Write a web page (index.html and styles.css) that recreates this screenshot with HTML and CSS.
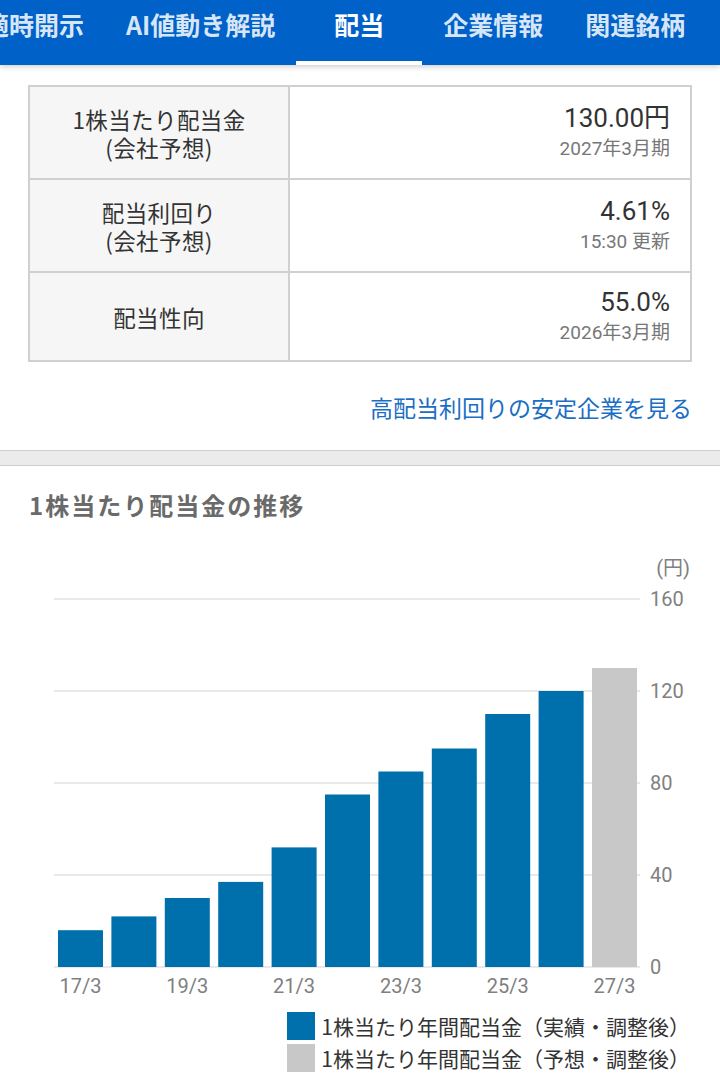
FILE: index.html
```html
<!DOCTYPE html>
<html lang="ja">
<head>
<meta charset="utf-8">
<title>配当</title>
<link rel="stylesheet" href="styles.css">
</head>
<body>
<header class="tabbar">
  <nav class="tabs">
    <a class="tab">適時開示</a>
    <a class="tab">AI値動き解説</a>
    <a class="tab active">配当</a>
    <a class="tab">企業情報</a>
    <a class="tab">関連銘柄</a>
  </nav>
</header>
<main>
  <section class="summary">
    <div class="stats">
      <div class="label">1株当たり配当金<br>(会社予想)</div>
      <div class="value"><span class="num">130.00円</span><span class="sub">2027年3月期</span></div>
      <div class="label">配当利回り<br>(会社予想)</div>
      <div class="value"><span class="num">4.61%</span><span class="sub">15:30 更新</span></div>
      <div class="label last">配当性向</div>
      <div class="value last"><span class="num">55.0%</span><span class="sub">2026年3月期</span></div>
    </div>
    <p class="more"><a href="#">高配当利回りの安定企業を見る</a></p>
  </section>
  <div class="sep"></div>
  <section class="trend">
    <h2 class="title">1株当たり配当金の推移</h2>
    <svg class="chart" width="720" height="455" viewBox="0 0 720 455">
      <text class="unit" x="690" y="25" text-anchor="end">(円)</text>
      <g class="grid">
        <line x1="54" y1="49" x2="640" y2="49"/>
        <line x1="54" y1="141" x2="640" y2="141"/>
        <line x1="54" y1="233" x2="640" y2="233"/>
        <line x1="54" y1="325" x2="640" y2="325"/>
        <line x1="54" y1="417" x2="640" y2="417"/>
      </g>
      <g class="ylab">
        <text x="650" y="56">160</text>
        <text x="650" y="148">120</text>
        <text x="650" y="240">80</text>
        <text x="650" y="332">40</text>
        <text x="650" y="424">0</text>
      </g>
      <g class="bars">
        <rect x="58" y="380.2" width="45" height="36.8"/>
        <rect x="111.4" y="366.4" width="45" height="50.6"/>
        <rect x="164.8" y="348" width="45" height="69"/>
        <rect x="218.2" y="331.9" width="45" height="85.1"/>
        <rect x="271.6" y="297.4" width="45" height="119.6"/>
        <rect x="325" y="244.5" width="45" height="172.5"/>
        <rect x="378.4" y="221.5" width="45" height="195.5"/>
        <rect x="431.8" y="198.5" width="45" height="218.5"/>
        <rect x="485.2" y="164" width="45" height="253"/>
        <rect x="538.6" y="141" width="45" height="276"/>
        <rect class="est" x="592" y="118" width="45" height="299"/>
      </g>
      <g class="xlab">
        <text x="80.5" y="443">17/3</text>
        <text x="187.3" y="443">19/3</text>
        <text x="294.1" y="443">21/3</text>
        <text x="400.9" y="443">23/3</text>
        <text x="507.7" y="443">25/3</text>
        <text x="614.5" y="443">27/3</text>
      </g>
    </svg>
    <ul class="legend">
      <li><span class="key actual"></span>1株当たり年間配当金（実績・調整後）</li>
      <li><span class="key forecast"></span>1株当たり年間配当金（予想・調整後）</li>
    </ul>
  </section>
</main>
</body>
</html>
```
FILE: styles.css
```css
* { box-sizing: border-box; }
html, body { margin: 0; padding: 0; background: #fff; }
body {
  font-family: Roboto, "Noto Sans CJK JP", sans-serif;
  color: #333;
  overflow: hidden;
}
.tabbar {
  height: 65px;
  background: #0062c8;
  box-shadow: 0 2px 5px rgba(0, 0, 0, 0.18);
  overflow: hidden;
  position: relative;
}
.tabs {
  display: flex;
  margin-left: -37px;
  white-space: nowrap;
}
.tab {
  flex: none;
  min-width: 126px;
  height: 65px;
  padding: 0 21px;
  text-align: center;
  font-family: "Noto Sans CJK JP", sans-serif;
  font-size: 25px;
  font-weight: 700;
  line-height: 48px;
  color: rgba(255, 255, 255, 0.86);
  border-bottom: 4px solid transparent;
}
.tab.active {
  color: #fff;
  border-bottom-color: #fff;
}
.summary { padding: 20px 28px 0; }
.stats {
  display: grid;
  grid-template-columns: 260px 1fr;
  grid-template-rows: 93px 93px 87px;
  border: 2px solid #d0d0d0;
}
.label {
  background: #f6f6f6;
  border-right: 2px solid #d0d0d0;
  border-bottom: 2px solid #d0d0d0;
  display: flex;
  align-items: center;
  justify-content: center;
  text-align: center;
  font-family: "Noto Sans CJK JP", sans-serif;
  font-size: 22.5px;
  letter-spacing: 0.4px;
  line-height: 28px;
  color: #333;
}
.value {
  border-bottom: 2px solid #d0d0d0;
  display: flex;
  flex-direction: column;
  justify-content: center;
  align-items: flex-end;
  padding-right: 20px;
}
.label.last, .value.last { border-bottom: 0; }
.num {
  font-size: 26px;
  line-height: 32px;
  color: #333;
}
.sub {
  font-size: 19px;
  line-height: 30px;
  color: #777;
}
.more {
  margin: 30px 0 0;
  padding-bottom: 28px;
  text-align: right;
  font-family: "Noto Sans CJK JP", sans-serif;
  font-size: 23px;
  line-height: 30px;
}
.more a { color: #1a6ec4; text-decoration: none; }
.sep {
  height: 16px;
  background: #ebebeb;
  border-top: 1px solid #cdcdcd;
  border-bottom: 1px solid #cdcdcd;
}
.trend { padding-top: 24px; }
.title {
  margin: 0 0 30px 29px;
  font-family: "Noto Sans CJK JP", sans-serif;
  font-size: 24px;
  line-height: 30px;
  font-weight: 700;
  color: #6a6a6a;
  letter-spacing: 2px;
}
.chart { display: block; }
.chart text {
  font-family: Roboto, "Noto Sans CJK JP", sans-serif;
  font-size: 20px;
  fill: #808080;
}
.chart .xlab text { text-anchor: middle; }
.grid line { stroke: #e9e9e9; stroke-width: 2; }
.bars rect { fill: #0070ad; }
.bars rect.est { fill: #c8c8c8; }
.legend {
  list-style: none;
  margin: 5px 30px 0 0;
  padding: 0;
  display: flex;
  flex-direction: column;
  align-items: flex-end;
}
.legend li {
  display: flex;
  align-items: center;
  gap: 6px;
  height: 32px;
  font-family: "Noto Sans CJK JP", sans-serif;
  font-size: 21px;
  color: #333;
}
.key { width: 28px; height: 28px; flex: none; }
.key.actual { background: #0070ad; }
.key.forecast { background: #c8c8c8; }
```
